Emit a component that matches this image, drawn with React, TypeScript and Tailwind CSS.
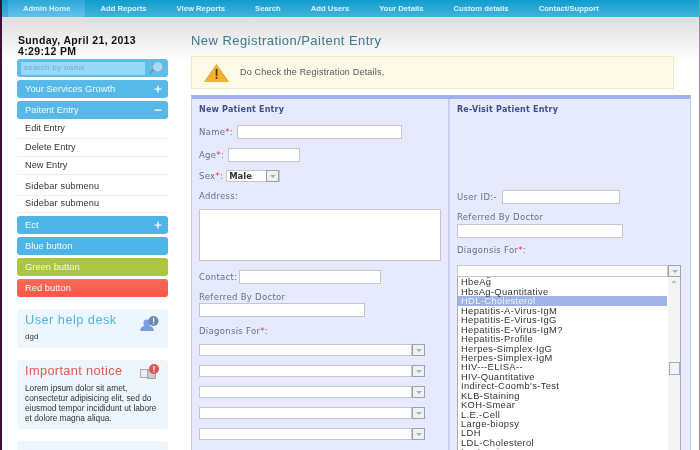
import React from 'react';
import { Plus, Minus } from 'lucide-react';

const NAV_ITEMS = ['Admin Home', 'Add Reports', 'View Reports', 'Search', 'Add Users', 'Your Details', 'Custom details', 'Contact/Support'];

const LIST_ITEMS = [
  'HBsAg',
  'HbeAg',
  'HbsAg-Quantitative',
  'HDL-Cholesterol',
  'Hepatitis-A-Virus-IgM',
  'Hepatitis-E-Virus-IgG',
  'Hepatitis-E-Virus-IgM?',
  'Hepatitis-Profile',
  'Herpes-Simplex-IgG',
  'Herpes-Simplex-IgM',
  'HIV---ELISA--',
  'HIV-Quantitative',
  "Indirect-Coomb's-Test",
  'KLB-Staining',
  'KOH-Smear',
  'L.E.-Cell',
  'Large-biopsy',
  'LDH',
  'LDL-Cholesterol',
  'Leptospira',
];

function Bar({ label, color, icon }: { label: string; color: string; icon?: 'plus' | 'minus' }) {
  return (
    <div className={`flex h-[18px] items-center justify-between rounded-[3px] pl-2 pr-[5px] text-[9.4px] text-[#f0fafe] ${color}`}>
      <span>{label}</span>
      {icon === 'plus' && <Plus className="h-[10px] w-[10px] text-white" strokeWidth={3} />}
      {icon === 'minus' && <Minus className="h-[10px] w-[10px] text-white" strokeWidth={3} />}
    </div>
  );
}

function SubItem({ label, className = '' }: { label: string; className?: string }) {
  return (
    <div className={`flex items-center border-b border-[#eeeeee] pl-2 text-[9.2px] text-[#333] ${className}`}>{label}</div>
  );
}

function Label({ text, req, colon = ':', className = '' }: { text: string; req?: boolean; colon?: string; className?: string }) {
  return (
    <span className={`text-[8.5px] leading-[11px] tracking-[0.3px] text-[#68708a] ${className}`}>
      {text}
      {req && <span className="text-[#e8304a]">*</span>}
      {colon}
    </span>
  );
}

function TextBox({ className = '' }: { className?: string }) {
  return <div className={`border border-[#c4c8cc] bg-white ${className}`} />;
}

function DropArrow() {
  return (
    <div className="flex h-[12px] w-[13px] shrink-0 items-center justify-center border border-[#9aa3ad] bg-[#eef0f2]">
      <div className="h-0 w-0 border-x-[3px] border-t-[3px] border-x-transparent border-t-[#a8b0b8]" />
    </div>
  );
}

function DiagnosisSelect({ className = '' }: { className?: string }) {
  return (
    <div className={`flex h-[12px] items-stretch ${className}`}>
      <div className="flex-1 border border-[#c4c8cc] bg-white" />
      <DropArrow />
    </div>
  );
}

function SearchGlass() {
  return (
    <svg width="14" height="12" viewBox="0 0 14 12" className="shrink-0">
      <path d="M1 11 L5.500 7" stroke="#8a9098" strokeWidth="2" strokeLinecap="round" />
      <circle cx="8.800" cy="4.800" r="4" fill="#a8d8f0" stroke="#c8d4dc" strokeWidth="1.200" />
    </svg>
  );
}

function HelpIcon() {
  return (
    <svg width="20" height="16" viewBox="0 0 20 16" className="mt-[3px] shrink-0">
      <circle cx="7" cy="7" r="3.600" fill="#7b9fdc" />
      <path d="M0 15c.5-4 3-5.500 7-5.500s6.500 1.500 7 5.500z" fill="#7b9fdc" />
      <circle cx="13.500" cy="5" r="5" fill="#6d8ab5" />
      <rect x="13" y="2" width="1.200" height="4" fill="#fff" />
      <rect x="13" y="6.800" width="1.200" height="1.200" fill="#fff" />
    </svg>
  );
}

function NoticeIcon() {
  return (
    <svg width="20" height="16" viewBox="0 0 20 16" className="shrink-0">
      <rect x="0.500" y="5.500" width="8" height="8" fill="#eceff2" stroke="#a8aeb4" />
      <rect x="7.500" y="6.500" width="8" height="8" fill="#c8ccd0" stroke="#a0a6ac" />
      <circle cx="14" cy="5" r="5" fill="#d9575a" />
      <rect x="13.400" y="2" width="1.200" height="4" fill="#fff" />
      <rect x="13.400" y="6.800" width="1.200" height="1.200" fill="#fff" />
    </svg>
  );
}

function WarningIcon() {
  return (
    <svg width="25" height="18" viewBox="0 0 25 18">
      <path d="M12.500 0.500 L24.500 17.500 H0.500 Z" fill="#f4b130" stroke="#d99a20" strokeWidth="0.600" />
      <rect x="11.700" y="5" width="1.700" height="7" fill="#4a3a10" />
      <rect x="11.700" y="13" width="1.700" height="1.800" fill="#4a3a10" />
    </svg>
  );
}

function Sidebar() {
  return (
    <aside className="flex w-[151px] shrink-0 flex-col pt-[18px]">
      <div className="pl-[1px] text-[10.5px] font-bold leading-[11px] tracking-[0.35px] text-[#111]">
        <div>Sunday, April 21, 2013</div>
        <div>4:29:12 PM</div>
      </div>
      <div className="mt-[2px] flex h-[18px] items-center justify-between rounded-[3px] bg-[#5cbcea] pl-[4px] pr-[5px]">
        <div className="flex h-[13px] w-[124px] items-center bg-[#96d8f6] pl-[3px] text-[8px] tracking-[0.3px] text-[#82a8c8]">search by name</div>
        <SearchGlass />
      </div>
      <div className="mt-[3px] flex flex-col gap-[3px]">
        <Bar label="Your Services Growth" color="bg-[#56b9e8]" icon="plus" />
        <Bar label="Paitent Entry" color="bg-[#56b9e8]" icon="minus" />
      </div>
      <div className="mt-[1px] flex flex-col">
        <SubItem label="Edit Entry" className="h-[19px]" />
        <SubItem label="Delete Entry" className="h-[18px]" />
        <SubItem label="New Entry" className="h-[18px]" />
        <SubItem label="Sidebar submenu" className="h-[21px] pt-[3px] tracking-[0.15px]" />
        <SubItem label="Sidebar submenu" className="h-[17px] tracking-[0.15px]" />
      </div>
      <div className="mt-[3px] flex flex-col gap-[3px]">
        <Bar label="Ect" color="bg-[#4db5e8]" icon="plus" />
        <Bar label="Blue button" color="bg-[#4db5e8]" />
        <Bar label="Green button" color="bg-[#abc63c]" />
        <Bar label="Red button" color="bg-gradient-to-b from-[#f86a58] to-[#f65548]" />
      </div>
      <div className="mt-[12px] h-[39px] rounded-[4px] bg-[#ecf6fc] px-2 pt-[4px]">
        <div className="flex h-[18px] items-start justify-between">
          <span className="text-[12.8px] leading-[14px] tracking-[0.45px] text-[#52b6de]">User help desk</span>
          <HelpIcon />
        </div>
        <div className="mt-[1px] text-[8px] leading-[10px] text-[#333]">dgd</div>
      </div>
      <div className="mt-[12px] h-[69px] rounded-[4px] bg-[#ecf6fc] px-2 pt-[4px]">
        <div className="flex items-start justify-between">
          <span className="text-[12.8px] leading-[14px] tracking-[0.35px] text-[#e25a50]">Important notice</span>
          <NoticeIcon />
        </div>
        <p className="mt-[3px] text-[8.3px] leading-[10px] text-[#333]">
          Lorem ipsum dolor sit amet, consectetur adipisicing elit, sed do eiusmod tempor incididunt ut labore et dolore magna aliqua.
        </p>
      </div>
      <div className="mt-[12px] h-[30px] rounded-[4px] bg-[#ecf6fc]" />
    </aside>
  );
}

function NewPatientColumn() {
  return (
    <div className="w-[258px] shrink-0 border-r-2 border-[#c8d0ee] pl-[7px] [font-family:'DejaVu_Sans',sans-serif]">
      <div className="mt-[5px] text-[8px] font-bold leading-[11px] tracking-[0.2px] text-[#3c5088]">New Patient Entry</div>
      <div className="mt-[10px] flex h-[14px] items-center gap-[4px]">
        <Label text="Name" req />
        <TextBox className="h-[14px] w-[165px]" />
      </div>
      <div className="mt-[9px] flex h-[14px] items-center gap-[4px]">
        <Label text="Age" req />
        <TextBox className="h-[14px] w-[72px]" />
      </div>
      <div className="mt-[8px] flex h-[12px] items-center gap-[3px]">
        <Label text="Sex" req />
        <div className="flex h-[12px] w-[54px] items-center justify-between border border-[#c4c8cc] bg-white pl-[2px] text-[8.5px] font-bold text-[#333]">
          Male
          <DropArrow />
        </div>
      </div>
      <Label text="Address" className="mt-[9px] block" />
      <TextBox className="mt-[7px] h-[52px] w-[242px]" />
      <div className="mt-[9px] flex h-[14px] items-center gap-[2px]">
        <Label text="Contact" />
        <TextBox className="h-[14px] w-[142px]" />
      </div>
      <Label text="Referred By Doctor" colon="" className="mt-[8px] block" />
      <TextBox className="h-[14px] w-[166px]" />
      <Label text="Diagonsis For" req className="mt-[9px] block" />
      <div className="mt-[7px] flex w-[226px] flex-col gap-[9px]">
        <DiagnosisSelect />
        <DiagnosisSelect />
        <DiagnosisSelect />
        <DiagnosisSelect />
        <DiagnosisSelect />
      </div>
    </div>
  );
}

function ComboList() {
  return (
    <div className="absolute left-0 top-[12px] h-[173px] w-[224px] overflow-hidden border-x border-[#a8acb0] bg-white [font-family:'Liberation_Sans',sans-serif]">
      <div className="-mt-[9px] pl-[3px] pr-[13px] text-[9.4px] leading-[9.45px] tracking-[0.35px] text-[#333]">
        {LIST_ITEMS.map((item) => (
          <div key={item} className={`h-[9.45px] ${item === 'HDL-Cholesterol' ? '-ml-[3px] bg-[#a0b4e4] pl-[3px] text-[#eef2fc]' : ''}`}>
            {item}
          </div>
        ))}
      </div>
      <div className="absolute bottom-0 right-0 top-0 w-[12px] bg-[#f4f4f4]">
        <div className="mx-auto mt-[3px] h-0 w-0 border-x-[3px] border-b-[3px] border-x-transparent border-b-[#c0c4c8]" />
        <div className="mx-auto mt-[79px] h-[13px] w-[11px] border border-[#9cb0c8] bg-[#eef4f8]" />
      </div>
    </div>
  );
}

function RevisitColumn() {
  return (
    <div className="flex-1 pl-[7px] [font-family:'DejaVu_Sans',sans-serif]">
      <div className="mt-[5px] text-[8px] font-bold leading-[11px] tracking-[0.2px] text-[#3c5088]">Re-Visit Patient Entry</div>
      <div className="mt-[75px] flex h-[14px] items-center gap-[5px]">
        <Label text="User ID" colon=":-" />
        <TextBox className="h-[14px] w-[118px]" />
      </div>
      <Label text="Referred By Doctor" colon="" className="mt-[8px] block" />
      <TextBox className="mt-[1px] h-[14px] w-[166px]" />
      <Label text="Diagonsis For" req className="mt-[7px] block" />
      <div className="relative mt-[9px] w-[224px]">
        <DiagnosisSelect />
        <div className="mt-[67px] flex flex-col gap-[9px]">
          <DiagnosisSelect />
          <DiagnosisSelect />
        </div>
        <ComboList />
      </div>
    </div>
  );
}

export default function App() {
  return (
    <div className="flex h-[450px] w-[700px] flex-col overflow-hidden border-l-[2px] border-r-[1px] border-l-[#3c1038] border-r-[#a08ca0] bg-white blur-[0.3px] [font-family:'Liberation_Sans',sans-serif]">
      <nav className="flex h-[17px] shrink-0 bg-gradient-to-b from-[#0c9ccc] to-[#40b4dc] pl-[6px] text-[7.7px] font-bold text-[#d8f0f8]">
        {NAV_ITEMS.map((item, i) => (
          <div
            key={item}
            className={`flex items-center rounded-b-[2px] px-[15px] ${i === 0 ? 'h-[18px] bg-gradient-to-b from-[#2aa8d8] to-[#64c4ee]' : 'h-[17px]'}`}
          >
            {item}
          </div>
        ))}
      </nav>
      <div className="flex flex-1 gap-[23px] bg-[linear-gradient(#dedede,#ffffff_45px)] pl-[15px]">
        <Sidebar />
        <main className="w-[500px] pt-[16px]">
          <h1 className="text-[13px] font-normal leading-[16px] tracking-[0.45px] text-[#3d7a90]">New Registration/Paitent Entry</h1>
          <div className="mt-[7px] flex h-[33px] w-[483px] items-center gap-[11px] border border-[#f0ecc8] bg-[#fdfbe8] pl-[12px] text-[9px] tracking-[0.2px] text-[#555]">
            <WarningIcon />
            <span>Do Check the Registration Details,</span>
          </div>
          <div className="mt-[6px] flex h-[400px] border-x border-t-[4px] border-x-[#c2cce8] border-t-[#9fb0ec] bg-[#e6eafc]">
            <NewPatientColumn />
            <RevisitColumn />
          </div>
        </main>
      </div>
    </div>
  );
}
